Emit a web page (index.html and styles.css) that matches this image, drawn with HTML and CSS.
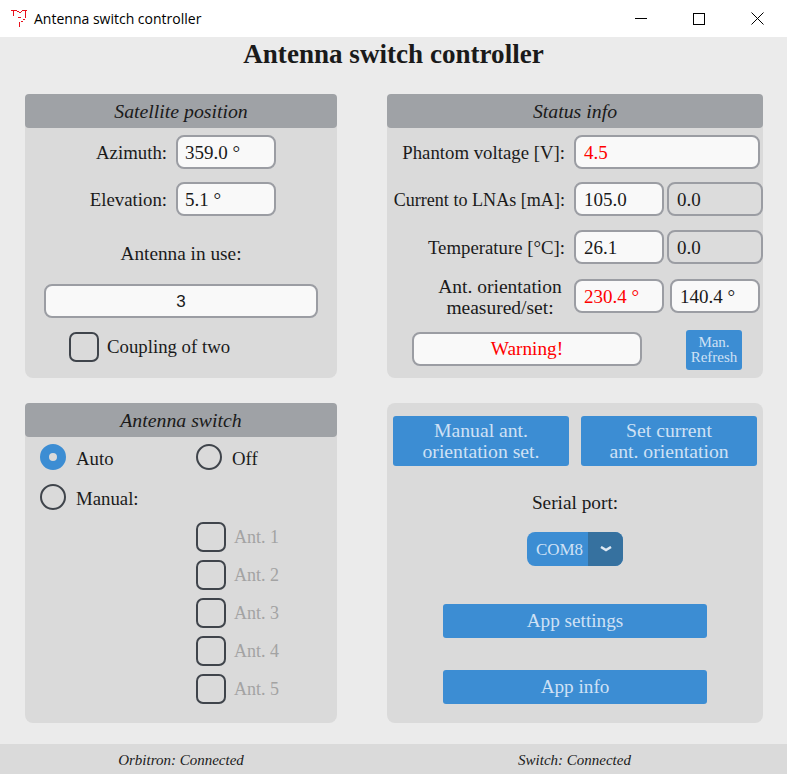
FILE: index.html
```html
<!DOCTYPE html>
<html lang="en">
<head>
    <meta charset="UTF-8">
    <meta name="viewport" content="width=device-width, initial-scale=1.0">
    <title>Antenna switch controller</title>
    <link rel="stylesheet" href="styles.css">
</head>
<body>
    <div class="titlebar">
        <svg class="app-icon" width="18" height="19" viewBox="0 0 18 19" fill="none" stroke="#e8101c" stroke-width="1" shape-rendering="crispEdges">
            <path d="M1 1.500h6M3.500 1v6M7 2.500h2M9 3.500h2M11 2.500h1M12 1.500h5M15.500 1v8M8 8.500h3M13 10.500h2M11 12.500h2M9.500 13v5"/>
        </svg>
        <span class="titlebar-text">Antenna switch controller</span>
        <div class="window-controls">
            <svg width="12" height="12" viewBox="0 0 12 12" stroke="#000" fill="none"><path d="M0 5.500h12"/></svg>
            <svg width="12" height="12" viewBox="0 0 12 12" stroke="#000" fill="none"><rect x="0.500" y="0.500" width="11" height="11"/></svg>
            <svg width="13" height="13" viewBox="0 0 13 13" stroke="#000" fill="none"><path d="M0.500 0.500l12 12M12.500 0.500l-12 12"/></svg>
        </div>
    </div>

    <h1 class="app-title">Antenna switch controller</h1>

    <main class="panels">
        <section class="panel">
            <h2 class="panel-head">Satellite position</h2>
            <div class="row sat-row">
                <label class="row-label sat-label">Azimuth:</label>
                <div class="field sat-field">359.0 °</div>
            </div>
            <div class="row sat-row">
                <label class="row-label sat-label">Elevation:</label>
                <div class="field sat-field">5.1 °</div>
            </div>
            <p class="center-label in-use-label">Antenna in use:</p>
            <div class="field in-use-field">3</div>
            <div class="check-row coupling">
                <span class="check"></span>
                <span>Coupling of two</span>
            </div>
        </section>

        <section class="panel">
            <h2 class="panel-head">Status info</h2>
            <div class="row status-row">
                <label class="row-label status-label">Phantom voltage [V]:</label>
                <div class="field field-wide alert">4.5</div>
            </div>
            <div class="row status-row">
                <label class="row-label status-label tight">Current to LNAs [mA]:</label>
                <div class="field field-half">105.0</div>
                <div class="field field-off">0.0</div>
            </div>
            <div class="row status-row temp-row">
                <label class="row-label status-label">Temperature [°C]:</label>
                <div class="field field-half">26.1</div>
                <div class="field field-off">0.0</div>
            </div>
            <div class="row status-row orient-row">
                <label class="row-label status-label orient-label">Ant. orientation<br>measured/set:</label>
                <div class="field field-half alert">230.4 °</div>
                <div class="field field-half orient-set">140.4 °</div>
            </div>
            <div class="warning-row">
                <div class="field warning alert">Warning!</div>
                <button class="btn refresh-btn" type="button">Man.<br>Refresh</button>
            </div>
        </section>

        <section class="panel">
            <h2 class="panel-head">Antenna switch</h2>
            <div class="radio-row">
                <div class="radio-item radio-auto">
                    <span class="radio radio-on"></span>
                    <span class="radio-text">Auto</span>
                </div>
                <div class="radio-item">
                    <span class="radio"></span>
                    <span class="radio-text">Off</span>
                </div>
            </div>
            <div class="radio-row radio-row-manual">
                <div class="radio-item">
                    <span class="radio"></span>
                    <span class="radio-text">Manual:</span>
                </div>
            </div>
            <div class="ant-list">
                <div class="check-row disabled"><span class="check"></span><span>Ant. 1</span></div>
                <div class="check-row disabled"><span class="check"></span><span>Ant. 2</span></div>
                <div class="check-row disabled"><span class="check"></span><span>Ant. 3</span></div>
                <div class="check-row disabled"><span class="check"></span><span>Ant. 4</span></div>
                <div class="check-row disabled"><span class="check"></span><span>Ant. 5</span></div>
            </div>
        </section>

        <section class="panel panel-actions">
            <div class="action-row">
                <button class="btn action-btn" type="button">Manual ant.<br>orientation set.</button>
                <button class="btn action-btn" type="button">Set current<br>ant. orientation</button>
            </div>
            <p class="center-label serial-label">Serial port:</p>
            <div class="combo">
                <span class="combo-value">COM8</span>
                <span class="combo-arrow">
                    <svg width="12" height="6" viewBox="0 0 12 6" fill="none" stroke="#dfe9f3" stroke-width="2.500"><path d="M1 1l5 3 5-3"/></svg>
                </span>
            </div>
            <button class="btn wide-btn first-wide" type="button">App settings</button>
            <button class="btn wide-btn" type="button">App info</button>
        </section>
    </main>

    <footer class="statusbar">
        <span class="status-left">Orbitron: Connected</span>
        <span class="status-right">Switch: Connected</span>
    </footer>
</body>
</html>
```

FILE: styles.css
```css
* {
    box-sizing: border-box;
}

html, body {
    height: 100%;
}

body {
    margin: 0;
    display: flex;
    flex-direction: column;
    background-color: #ebebeb;
    color: #1a1a1a;
    font-family: "Liberation Serif", serif;
    font-size: 18.800px;
}

/* window chrome */

.titlebar {
    display: flex;
    align-items: center;
    height: 37px;
    padding-left: 10px;
    background-color: #fff;
}

.app-icon {
    margin-right: 6px;
}

.titlebar-text {
    font-family: "Open Sans", sans-serif;
    font-size: 14px;
    color: #000;
}

.window-controls {
    display: flex;
    align-items: center;
    gap: 46px;
    margin-left: auto;
    padding-right: 23px;
}

.app-title {
    margin: 0;
    height: 57px;
    padding-top: 1px;
    text-align: center;
    font-size: 27.100px;
    line-height: 32px;
    font-weight: bold;
}

/* panels */

.panels {
    display: grid;
    grid-template-columns: 312px 376px;
    grid-template-rows: 284px 320px;
    column-gap: 50px;
    row-gap: 25px;
    padding-left: 25px;
}

.panel {
    background-color: #dadada;
    border-radius: 8px;
}

.panel-head {
    margin: 0;
    height: 34px;
    background-color: #9fa2a6;
    border-radius: 4px;
    text-align: center;
    font-size: 19.800px;
    font-weight: normal;
    font-style: italic;
    line-height: 35px;
}

.row {
    display: flex;
    align-items: center;
}

.row-label {
    padding-top: 2px;
    text-align: right;
    white-space: nowrap;
}

.tight {
    font-size: 18.100px;
}

.field {
    height: 34px;
    padding-left: 7px;
    background-color: #f9f9f9;
    border: 2px solid #9b9da3;
    border-radius: 8px;
    font-size: 19px;
    line-height: 32px;
}

.alert {
    color: #f00;
}

.center-label {
    margin: 0;
    text-align: center;
    font-size: 19.300px;
    line-height: 22px;
}

/* satellite position */

.sat-row {
    margin-top: 13px;
}

.sat-row:first-of-type {
    margin-top: 7px;
}

.sat-label {
    width: 142px;
    margin-right: 9px;
}

.sat-field {
    width: 100px;
}

.in-use-label {
    margin-top: 27px;
}

.in-use-field {
    width: 274px;
    margin: 19px 0 0 19px;
    padding-left: 0;
    text-align: center;
    font-family: "Liberation Sans", sans-serif;
    font-size: 17px;
    line-height: 32px;
}

.check-row {
    display: flex;
    align-items: center;
    gap: 8px;
}

.coupling {
    margin: 14px 0 0 44px;
}

.check {
    width: 30px;
    height: 30px;
    border: 2px solid #3f444b;
    border-radius: 7px;
}

/* status info */

.status-row {
    margin-top: 13px;
}

.status-row:first-of-type {
    margin-top: 7px;
}

.status-row .field {
    padding-left: 8px;
}

.temp-row {
    margin-top: 14px;
}

.orient-row {
    margin-top: 11px;
}

.status-label {
    width: 178px;
    margin-right: 9px;
}

.orient-label {
    height: 42px;
    padding-top: 1px;
    padding-left: 48px;
    text-align: center;
    font-size: 19.500px;
    line-height: 21px;
}

.field-wide {
    width: 186px;
}

.field-half {
    width: 90px;
}

.field-off {
    width: 96px;
    margin-left: 3px;
    background-color: #dcdcdc;
}

.orient-set {
    margin-left: 6px;
}

.warning-row {
    display: flex;
    align-items: flex-start;
    margin: 13px 0 0 25px;
}

.warning {
    width: 230px;
    margin-top: 2px;
    padding-left: 0;
    text-align: center;
    font-size: 19.300px;
    line-height: 30px;
}

.btn {
    display: block;
    padding: 0;
    border: none;
    border-radius: 3px;
    background-color: #3c8dd3;
    color: #cfe1f5;
    font-family: inherit;
    font-size: 19.200px;
    line-height: 21px;
    text-align: center;
}

.refresh-btn {
    width: 56px;
    height: 40px;
    margin-left: 44px;
    font-size: 15px;
    line-height: 15px;
}

/* antenna switch */

.radio-row {
    display: flex;
    margin-top: 7px;
    padding-left: 15px;
}

.radio-row-manual {
    margin-top: 14px;
}

.radio-item {
    display: flex;
    align-items: center;
    gap: 10px;
}

.radio-auto {
    width: 156px;
}

.radio {
    width: 26px;
    height: 26px;
    border: 2px solid #3f444b;
    border-radius: 50%;
}

.radio-on {
    border: 9px solid #3c8dd3;
    background-color: #dadada;
}

.radio-text {
    padding-top: 3px;
}

.ant-list {
    display: flex;
    flex-direction: column;
    gap: 8px;
    margin: 12px 0 0 171px;
    font-size: 18px;
}

.disabled {
    color: #a3a3a3;
}

/* actions */

.action-row {
    display: flex;
    justify-content: center;
    gap: 12px;
    padding-top: 13px;
}

.action-btn {
    width: 176px;
    height: 50px;
    font-size: 19.700px;
}

.serial-label {
    margin-top: 26px;
}

.combo {
    display: flex;
    width: 96px;
    height: 34px;
    margin: 18px auto 0;
    border-radius: 8px;
    overflow: hidden;
    background-color: #3c8dd3;
    color: #cfe1f5;
    font-size: 17px;
}

.combo-value {
    width: 61px;
    padding-left: 4px;
    text-align: center;
    line-height: 35px;
}

.combo-arrow {
    display: flex;
    flex: 1;
    align-items: center;
    justify-content: center;
    background-color: #36719f;
}

.wide-btn {
    width: 264px;
    height: 34px;
    margin: 32px auto 0;
    padding-bottom: 2px;
}

.first-wide {
    margin-top: 38px;
}

/* status bar */

.statusbar {
    display: grid;
    grid-template-columns: 362px 1fr;
    margin-top: auto;
    height: 30px;
    background-color: #dadada;
    font-size: 15px;
    font-style: italic;
    line-height: 32px;
    text-align: center;
}
```
